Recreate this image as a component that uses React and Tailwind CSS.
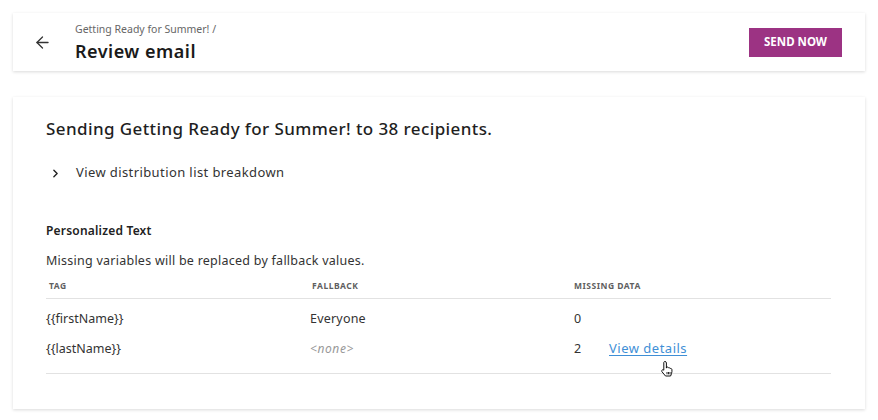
import React from "react";
import { ArrowLeft, ChevronRight } from "lucide-react";

const rows = [
  { tag: "{{firstName}}", fallback: "Everyone", missing: 0 },
  { tag: "{{lastName}}", fallback: null, missing: 2 },
];

function HandCursor() {
  return (
    <svg width="16" height="18" viewBox="0 0 16 18" className="absolute left-[660px] top-[360px]">
      <path
        d="M5 1.5c.8 0 1.4.6 1.4 1.4v5.2l.1-1c.8-.3 1.6 0 1.8.7.7-.4 1.6-.1 1.8.7.8-.3 1.7.1 1.8 1 .1 1.3.1 2.6-.3 3.8L10.6 16H5.5L2 11.8c-.5-.6-.4-1.5.3-1.9.6-.3 1.2-.1 1.5.3V2.9C3.6 2.1 4.2 1.5 5 1.5z"
        fill="#fff"
        stroke="#111"
        strokeWidth="1"
        strokeLinejoin="round"
      />
      <path d="M7 12v2.3M8.5 12v2.3M10 12v2.3" stroke="#111" strokeWidth="0.9" />
    </svg>
  );
}

export default function App() {
  return (
    <div
      className="relative w-[878px] h-[420px] bg-white px-[13px] pt-[13px] text-[#222]"
      style={{ fontFamily: "'Noto Sans', sans-serif" }}
    >
      <div className="flex items-center h-[58px] bg-white shadow-[0_1px_3px_rgba(0,0,0,0.15)] pl-[20px] pr-[23px]">
        <ArrowLeft className="w-[19px] h-[19px] text-[#333]" strokeWidth={1.6} />
        <div className="ml-[23px] flex flex-col">
          <span className="text-[10.5px] text-[#666] leading-[14px]">Getting Ready for Summer! /</span>
          <span className="text-[18px] font-semibold leading-[24px] mt-[3px] tracking-[0.5px] text-[#1a1a1a]">
            Review email
          </span>
        </div>
        <button className="ml-auto w-[93px] h-[29px] bg-[#9c3383] text-white text-[11.5px] font-bold">
          SEND NOW
        </button>
      </div>

      <div className="mt-[26px] h-[312px] bg-white shadow-[0_1px_3px_rgba(0,0,0,0.15)] pl-[33px] pr-[34px] pt-[20px]">
        <h1 className="text-[17px] font-medium leading-[24px] tracking-[0.4px] text-[#1f1f1f]">
          Sending Getting Ready for Summer! to 38 recipients.
        </h1>
        <div className="flex items-center mt-[23px] h-[18px]">
          <ChevronRight className="w-[13px] h-[13px] ml-[3px] text-[#222]" strokeWidth={2.6} />
          <span className="ml-[14px] text-[13px] tracking-[0.4px] text-[#333]">View distribution list breakdown</span>
        </div>

        <h2 className="mt-[41px] text-[12px] font-semibold text-[#222] leading-[16px] tracking-[0.2px]">
          Personalized Text
        </h2>
        <p className="mt-[14px] text-[12.5px] text-[#333] leading-[16px] tracking-[0.25px]">
          Missing variables will be replaced by fallback values.
        </p>

        <div className="mt-[11px] grid grid-cols-[264px_264px_1fr] h-[19px] items-start border-b border-[#e2e2e2] text-[8.5px] font-bold text-[#5f5f5f] uppercase leading-[12px] tracking-[0.5px] pl-[3px]">
          <span>Tag</span>
          <span className="-ml-[1px]">Fallback</span>
          <span className="-ml-[3px]">Missing Data</span>
        </div>
        <div className="border-b border-[#e2e2e2] pt-[5px] pb-[9px]">
          {rows.map((r) => (
            <div key={r.tag} className="grid grid-cols-[264px_264px_1fr] h-[30px] items-center text-[12.5px] text-[#333]">
              <span>{r.tag}</span>
              <span className="tracking-[0.2px]">
                {r.fallback ? (
                  r.fallback
                ) : (
                  <span className="italic text-[#999] text-[12px] tracking-[0.6px]">&lt;none&gt;</span>
                )}
              </span>
              <span className="flex items-center">
                <span className="w-[35px]">{r.missing}</span>
                {r.missing > 0 && (
                  <a
                    href="#"
                    className="text-[13px] tracking-[0.5px] text-[#3f8fd6] underline underline-offset-2 decoration-[#3f8fd6]"
                  >
                    View details
                  </a>
                )}
              </span>
            </div>
          ))}
        </div>
      </div>
      <HandCursor />
    </div>
  );
}
